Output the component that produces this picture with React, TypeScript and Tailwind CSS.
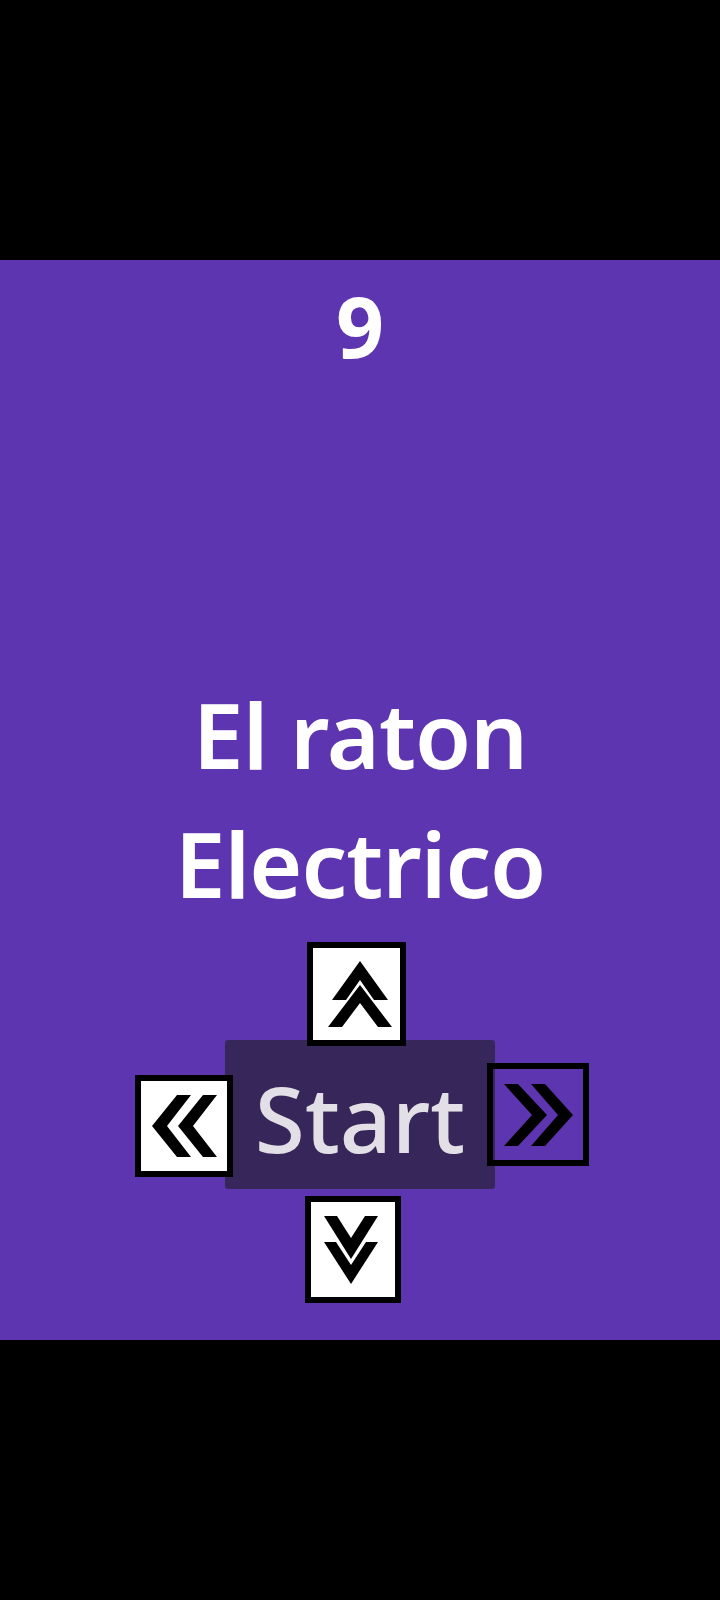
import React from "react";

const font = { fontFamily: '"Noto Sans", "Open Sans", sans-serif' };

function Box({
  w,
  h,
  inner,
  polys,
  white = true,
  className = "",
}: {
  w: number;
  h: number;
  inner: [number, number];
  polys: string[];
  white?: boolean;
  className?: string;
}) {
  return (
    <div
      className={`relative z-10 box-border border-[6px] border-black ${white ? "bg-white" : "bg-transparent"} ${className}`}
      style={{ width: w, height: h }}
    >
      <svg width={inner[0]} height={inner[1]} viewBox={`0 0 ${inner[0]} ${inner[1]}`} className="block">
        {polys.map((p, i) => (
          <polygon key={i} points={p} fill="#000" />
        ))}
      </svg>
    </div>
  );
}

export default function App() {
  return (
    <div className="w-[720px] h-[1600px] bg-black flex flex-col" style={font}>
      <div className="h-[260px] shrink-0" />
      <div className="h-[1080px] shrink-0 bg-[#5e35b1] flex flex-col items-center">
        <div className="pt-[9px] text-[84px] leading-[114px] font-bold text-white">9</div>
        <div className="mt-[287px] text-[91px] leading-[129px] tracking-[-1px] font-semibold text-white text-center">
          <div>El raton</div>
          <div>Electrico</div>
        </div>
        <div className="mt-[14px] flex flex-col items-center">
          <Box
            w={99}
            h={104}
            inner={[87, 92]}
            className="mr-[7px] -mb-[6px]"
            polys={[
              "47,13 75,52 61,52 47,32 33,52 19,52",
              "47,37 79,79 65,79 47,55 29,79 15,79",
            ]}
          />
          <div className="flex items-start ml-[4px]">
            <Box
              w={98}
              h={102}
              inner={[86, 90]}
              className="mt-[35px] -mr-[8px]"
              polys={[
                "11,45 36,14 50,14 26,45 50,76 36,76",
                "37,45 62,14 76,14 52,45 76,76 62,76",
              ]}
            />
            <div className="w-[270px] h-[149px] bg-[#372659] rounded-[3px] flex justify-center pt-[16px]">
              <span className="text-[91px] leading-[124px] font-medium text-[#e2e0e6]">Start</span>
            </div>
            <Box
              w={102}
              h={103}
              inner={[90, 91]}
              white={false}
              className="mt-[23px] -ml-[8px]"
              polys={[
                "11,15 25,15 54,46 25,77 11,77 39,46",
                "38,15 52,15 80,46 52,77 38,77 65,46",
              ]}
            />
          </div>
          <Box
            w={96}
            h={107}
            inner={[84, 95]}
            className="mt-[7px] mr-[14px]"
            polys={[
              "13,14 26,14 40,36 54,14 67,14 40,57",
              "13,40 25,40 40,63 55,40 67,40 40,82",
            ]}
          />
        </div>
      </div>
      <div className="flex-1" />
    </div>
  );
}
